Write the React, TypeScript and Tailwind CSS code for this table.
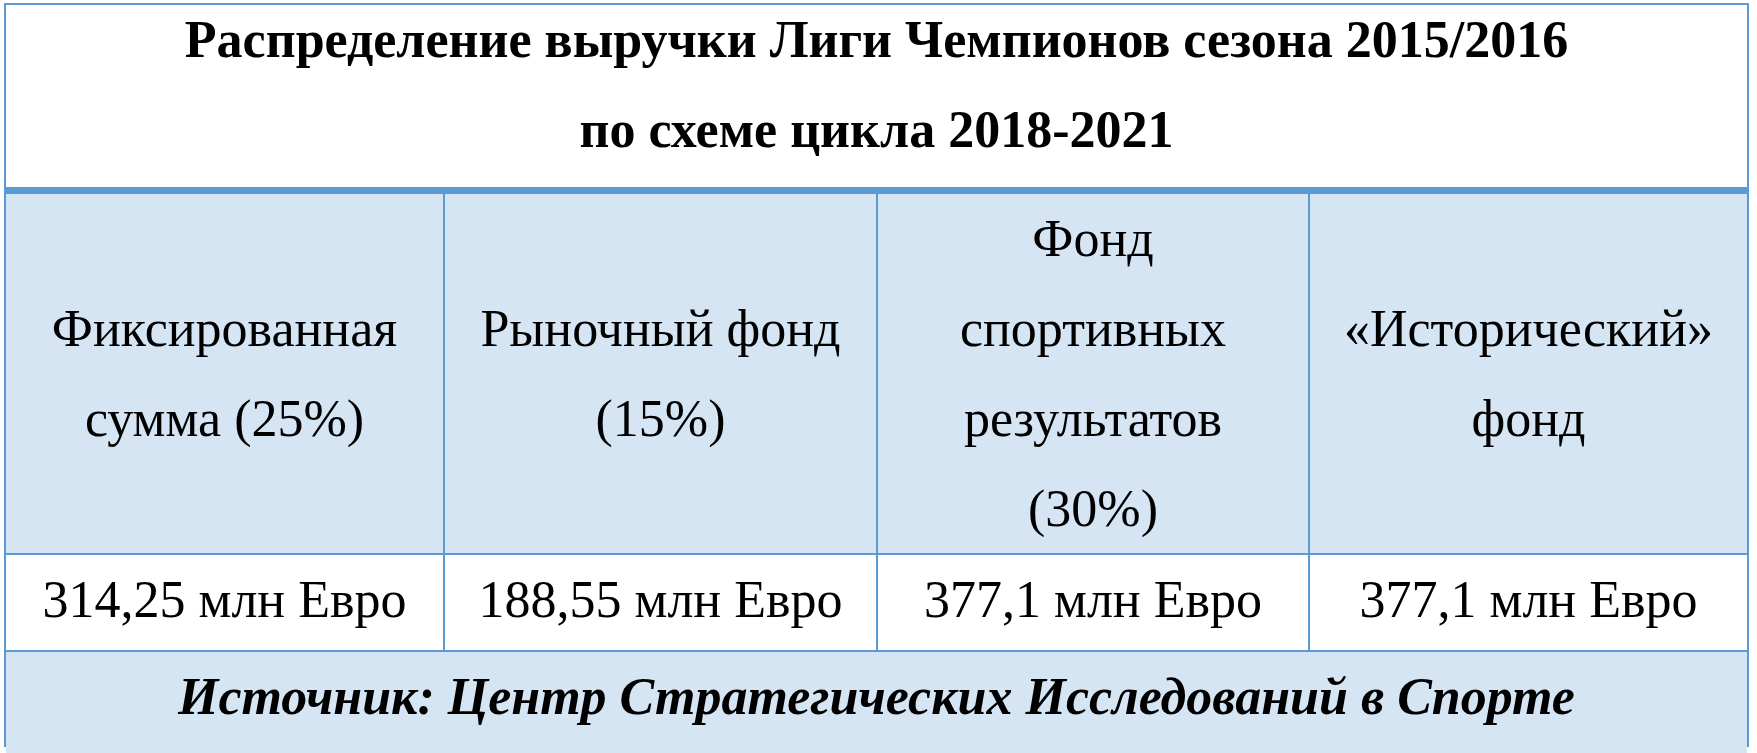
import React from "react";

export default function App() {
  const cols = "grid grid-cols-[439px_433px_432px_437px]";
  const head = "flex items-center justify-center text-center pb-[36px]";
  const data = "flex items-center justify-center text-center pb-[30px]";
  return (
    <div className="w-[1757px] h-[753px] bg-white pl-[4px] pt-[3px] text-black font-['Liberation_Serif','Times_New_Roman',serif]">
      <div className="w-[1745px] h-[744px] border-2 border-[#5b9bd5] flex flex-col">
        <div className="h-[189px] border-b-[7px] border-[#5b9bd5] bg-white flex flex-col items-center justify-center pb-[22px] text-[52px] font-bold leading-[90px]">
          <div>Распределение выручки Лиги Чемпионов сезона 2015/2016</div>
          <div>по схеме цикла 2018-2021</div>
        </div>
        <div className={`${cols} h-[361px] border-b-2 border-[#5b9bd5] bg-[#d6e5f4] text-[52px] leading-[90px]`}>
          <div className={`${head} border-r-2 border-[#5b9bd5]`}>
            <div>Фиксированная<br />сумма (25%)</div>
          </div>
          <div className={`${head} border-r-2 border-[#5b9bd5]`}>
            <div>Рыночный фонд<br />(15%)</div>
          </div>
          <div className={`${head} border-r-2 border-[#5b9bd5]`}>
            <div>Фонд<br />спортивных<br />результатов<br />(30%)</div>
          </div>
          <div className={head}>
            <div>«Исторический»<br />фонд</div>
          </div>
        </div>
        <div className={`${cols} h-[97px] border-b-2 border-[#5b9bd5] bg-white text-[52px] leading-[90px]`}>
          <div className={`${data} border-r-2 border-[#5b9bd5]`}>314,25 млн Евро</div>
          <div className={`${data} border-r-2 border-[#5b9bd5]`}>188,55 млн Евро</div>
          <div className={`${data} border-r-2 border-[#5b9bd5]`}>377,1 млн Евро</div>
          <div className={data}>377,1 млн Евро</div>
        </div>
        <div className="flex-1 bg-[#d6e5f4] flex items-center justify-center pb-[32px] text-[52px] font-bold italic leading-[90px]">
          Источник: Центр Стратегических Исследований в Спорте
        </div>
      </div>
    </div>
  );
}
